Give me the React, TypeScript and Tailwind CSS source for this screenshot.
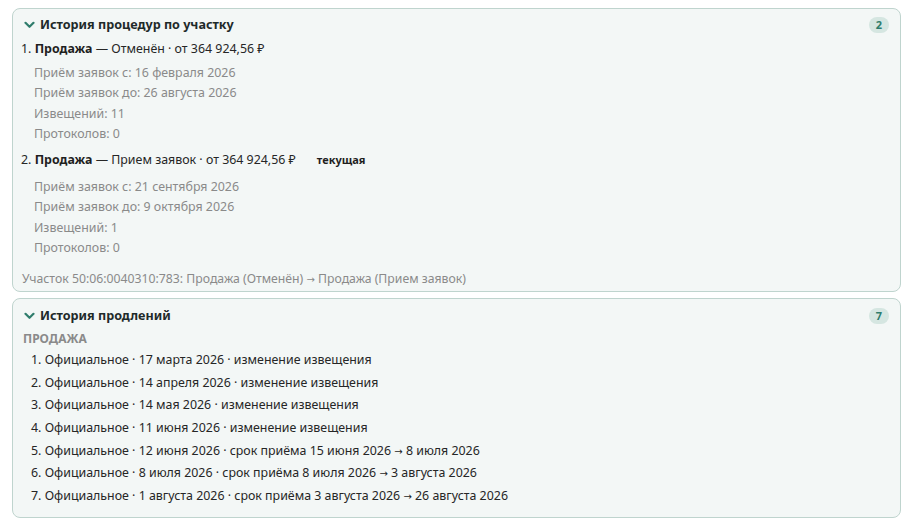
import React from "react";

const Chevron = () => (
  <svg width="11" height="8" viewBox="0 0 11 8" className="shrink-0">
    <path d="M1.5 1.8 L5.5 5.8 L9.5 1.8" fill="none" stroke="#2f7d6c" strokeWidth="2.2" strokeLinecap="round" strokeLinejoin="round" />
  </svg>
);

const Arrow = () => <span style={{ fontFamily: '"DejaVu Sans", sans-serif' }} className="text-[10px]">→</span>;

const Header = ({ title, count }: { title: string; count: string }) => (
  <div className="flex h-[20px] items-center">
    <div className="ml-[11px] flex items-center">
      <Chevron />
    </div>
    <div className="ml-[5px] text-[12.6px] font-bold text-[#1f2a2a]">{title}</div>
    <div className="ml-auto mr-[11px] flex h-[16px] w-[20px] items-center justify-center rounded-full bg-[#d5e6e1] text-[11px] font-bold text-[#2f7d6c]">
      {count}
    </div>
  </div>
);

const Sub = ({ children, extra = "" }: { children: React.ReactNode; extra?: string }) => (
  <div className={`h-[20px] leading-[20px] text-[#8a8a8a] ${extra}`}>{children}</div>
);

const items: React.ReactNode[] = [
  "Официальное · 17 марта 2026 · изменение извещения",
  "Официальное · 14 апреля 2026 · изменение извещения",
  "Официальное · 14 мая 2026 · изменение извещения",
  "Официальное · 11 июня 2026 · изменение извещения",
  <>Официальное · 12 июня 2026 · срок приёма 15 июня 2026 <Arrow /> 8 июля 2026</>,
  <>Официальное · 8 июля 2026 · срок приёма 8 июля 2026 <Arrow /> 3 августа 2026</>,
  <>Официальное · 1 августа 2026 · срок приёма 3 августа 2026 <Arrow /> 26 августа 2026</>,
];

export default function App() {
  return (
    <div className="min-h-[527px] w-[913px] bg-white pt-[8px] text-[12.4px] text-[#262626]" style={{ fontFamily: '"Noto Sans", "Open Sans", sans-serif' }}>
      <div className="mx-[12px] rounded-[8px] border border-[#bfd4ce] bg-[#f3f7f6] pb-[2px] pt-[6px]">
        <Header title="История процедур по участку" count="2" />
        <div className="ml-[8px] mt-[4px] h-[20px] leading-[20px]">
          1. <span className="font-bold text-[#1f1f1f]">Продажа</span> — Отменён · от 364 924,56 ₽
        </div>
        <div className="ml-[21px] mt-[4px]">
          <Sub>Приём заявок с: 16 февраля 2026</Sub>
          <Sub>Приём заявок до: 26 августа 2026</Sub>
          <Sub extra="mt-[1px]">Извещений: 11</Sub>
          <Sub>Протоколов: 0</Sub>
        </div>
        <div className="ml-[8px] mt-[6px] flex h-[20px] items-center leading-[20px]">
          <span>
            2. <span className="font-bold text-[#1f1f1f]">Продажа</span> — Прием заявок · от 364 924,56 ₽
          </span>
          <span className="ml-[21px] text-[11px] font-bold text-[#1f1f1f]">текущая</span>
        </div>
        <div className="ml-[21px] mt-[7px]">
          <Sub>Приём заявок с: 21 сентября 2026</Sub>
          <Sub>Приём заявок до: 9 октября 2026</Sub>
          <Sub extra="mt-[1px]">Извещений: 1</Sub>
          <Sub>Протоколов: 0</Sub>
        </div>
        <div className="ml-[9px] mt-[11px] h-[20px] text-[12.25px] leading-[20px] text-[#8a8a8a]">
          Участок 50:06:0040310:783: Продажа (Отменён) <Arrow /> Продажа (Прием заявок)
        </div>
      </div>

      <div className="mx-[12px] mt-[6px] rounded-[8px] border border-[#bfd4ce] bg-[#f3f7f6] pb-[9px] pt-[7px]">
        <Header title="История продлений" count="7" />
        <div className="ml-[10px] mt-[3px] h-[20px] text-[12px] font-bold uppercase leading-[20px] text-[#8a8a8a]">Продажа</div>
        <div className="ml-[18px]">
          {items.map((t, i) => (
            <div key={i} className="h-[22.67px] leading-[22.67px]">
              {i + 1}. {t}
            </div>
          ))}
        </div>
      </div>
    </div>
  );
}
